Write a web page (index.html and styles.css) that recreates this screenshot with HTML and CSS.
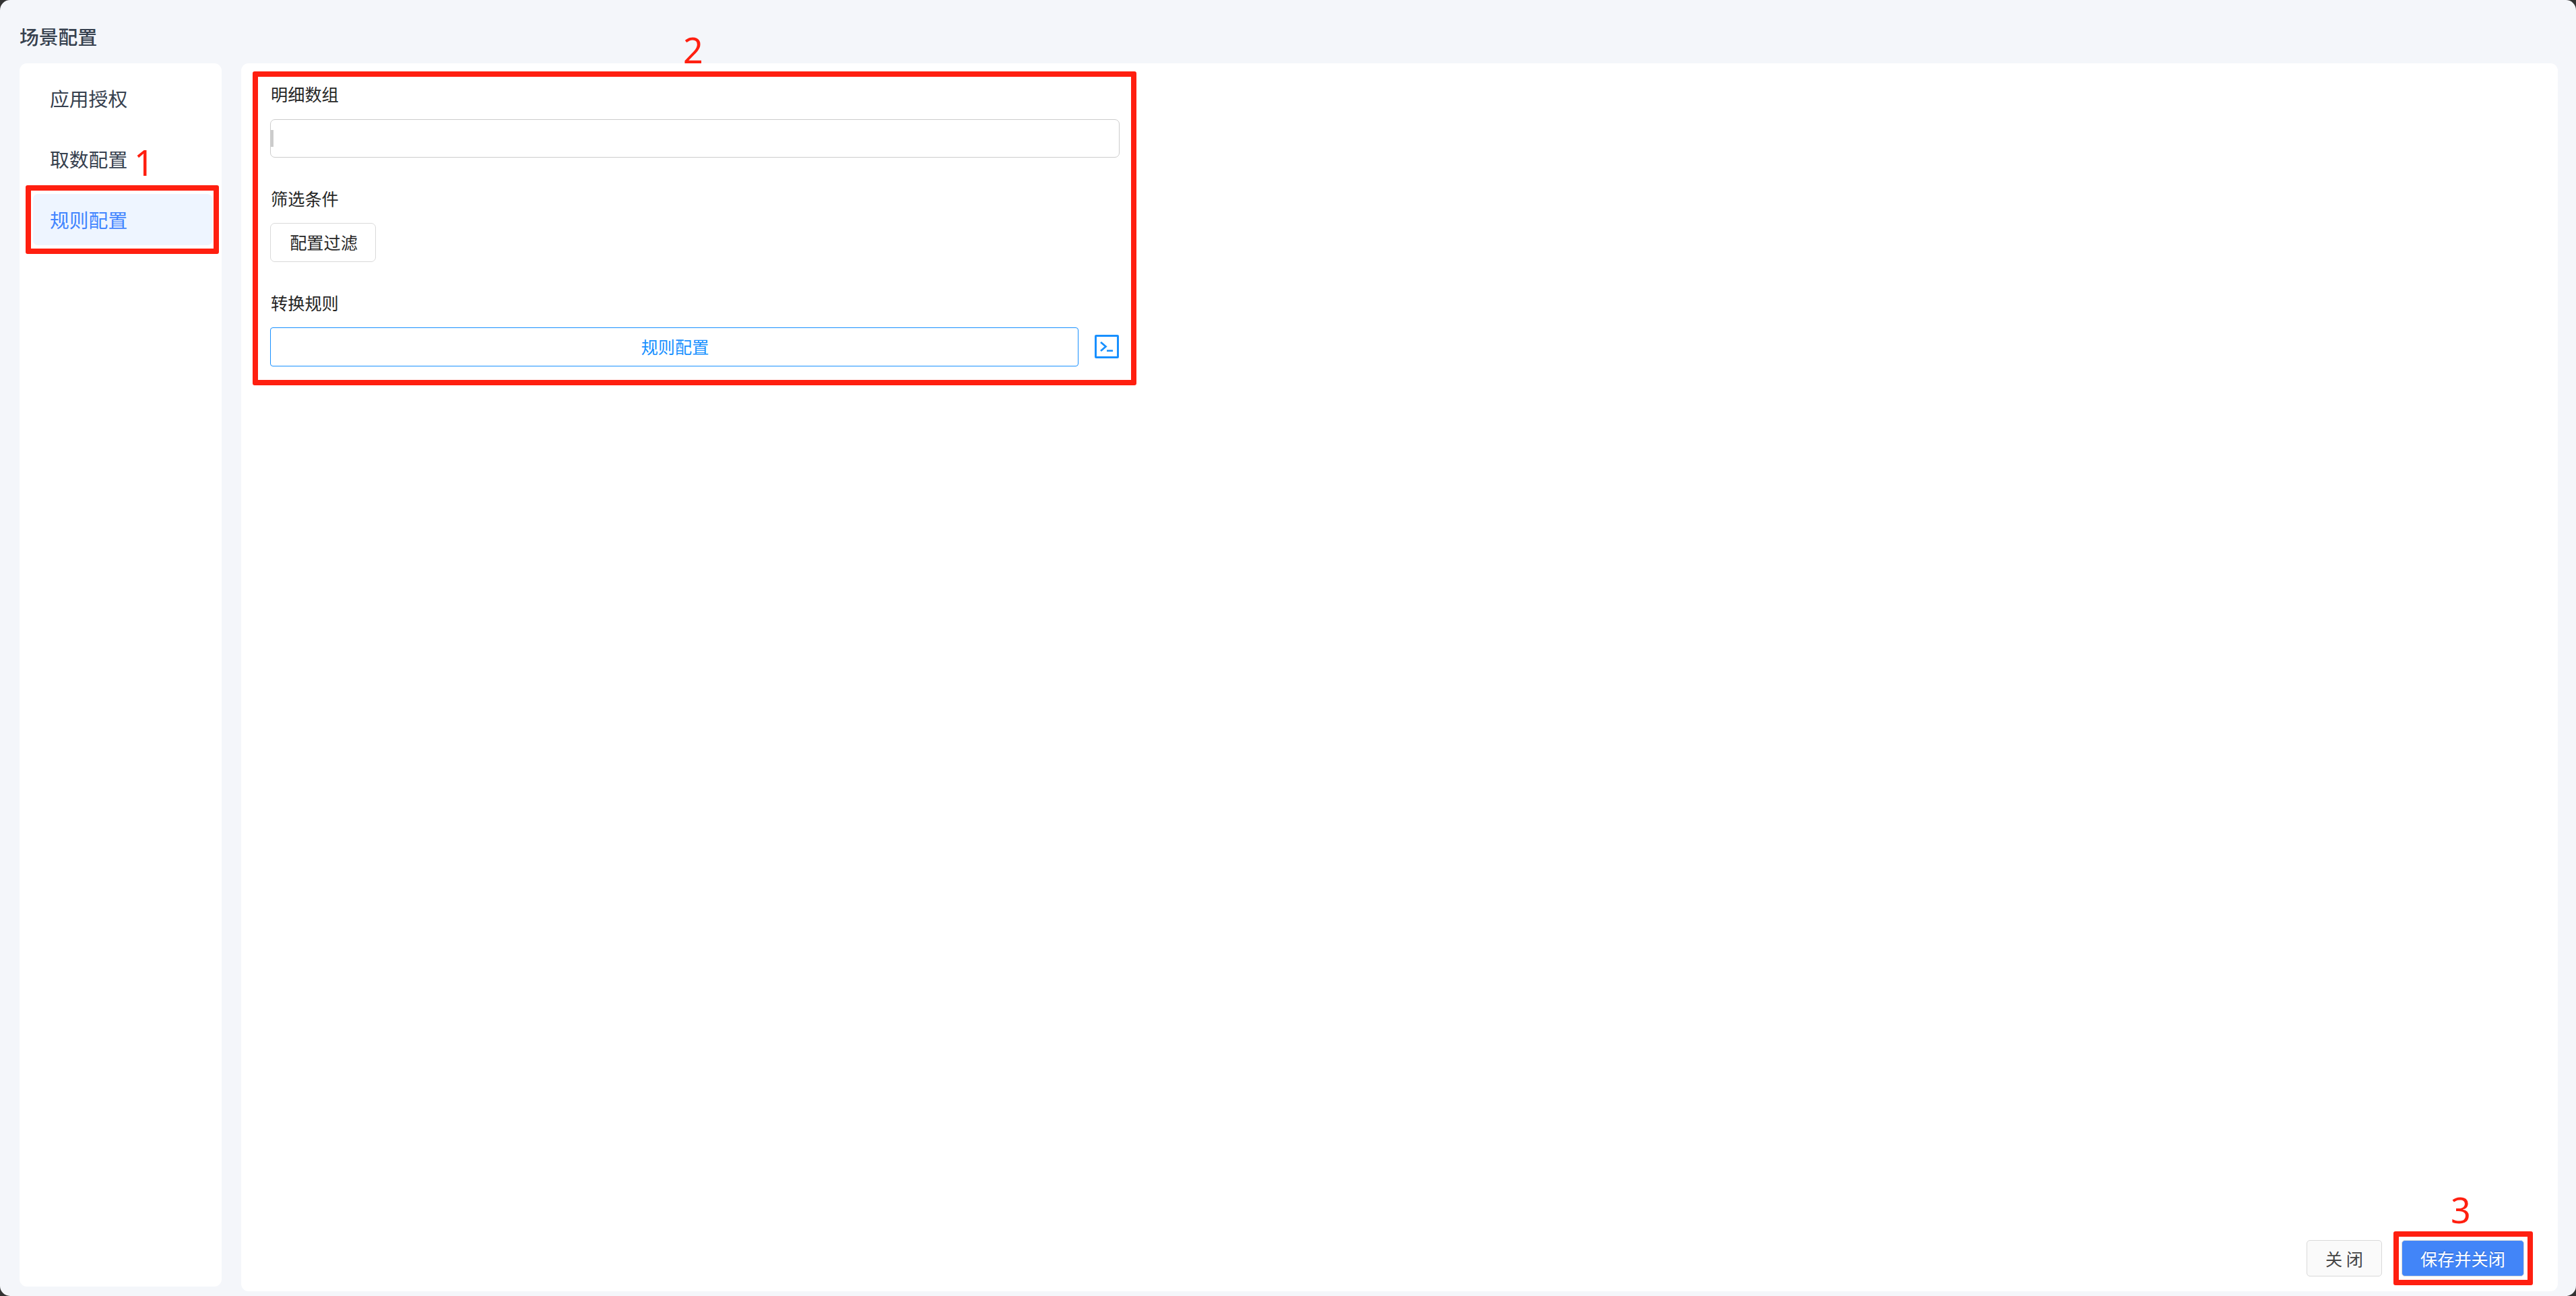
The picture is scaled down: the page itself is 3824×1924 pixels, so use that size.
FILE: index.html
```html
<!DOCTYPE html>
<html lang="zh-CN">
<head>
    <meta charset="UTF-8" />
    <meta name="viewport" content="width=device-width, initial-scale=1.0" />
    <title>场景配置</title>
    <link rel="stylesheet" href="styles.css">
</head>
<body>
    <div class="modal">
        <header class="modal-header"><h1 class="title">场景配置</h1></header>

        <div class="modal-body">
            <!-- Side menu -->
            <nav class="sidebar">
                <a class="menu-item">应用授权</a>
                <a class="menu-item">取数配置</a>
                <a class="menu-item menu-item-active">规则配置</a>
            </nav>

            <!-- Rule settings -->
            <main class="content">
                <form class="rule-form" action="">
                    <div class="form-item">
                        <label class="form-label">明细数组</label>
                        <div class="array-input"><span class="input-handle"></span></div>
                    </div>
                    <div class="form-item">
                        <label class="form-label">筛选条件</label>
                        <button class="btn btn-filter" type="button">配置过滤</button>
                    </div>
                    <div class="form-item">
                        <label class="form-label">转换规则</label>
                        <div class="rule-row">
                            <button class="btn btn-rule" type="button">规则配置</button>
                            <svg class="code-icon" viewBox="0 0 36 35" fill="none" stroke="#1890ff">
                                <rect x="1.5" y="1.5" width="33" height="32" rx="0.6" stroke-width="3" />
                                <path d="M9 11l7.5 6.5L9 24" stroke-width="2.8" />
                                <path d="M18 23.7h9" stroke-width="2.6" />
                            </svg>
                        </div>
                    </div>
                </form>

                <footer class="footer">
                    <button class="btn btn-close" type="button">关 闭</button>
                    <button class="btn btn-save" type="button">保存并关闭</button>
                </footer>
            </main>
        </div>
    </div>

    <!-- Step marks -->
    <div class="mark mark-menu"></div>
    <div class="mark mark-form"></div>
    <div class="mark mark-save"></div>
    <span class="step step-1">1</span>
    <span class="step step-2">2</span>
    <span class="step step-3">3</span>
</body>
</html>
```

FILE: styles.css
```css
/* Global CSS */
*,
*::before,
*::after {
    box-sizing: border-box;
}

body {
    position: relative;
    height: 1924px;
    margin: 0;
    overflow: hidden;
    background: #333;
    color: #262626;
    font-family: 'Noto Sans CJK SC', sans-serif;
    font-size: 25.2px;
}

button {
    margin: 0;
    font-family: inherit;
    font-size: inherit;
}

/* Modal */
.modal {
    display: flex;
    flex-direction: column;
    height: 100%;
    border-radius: 15px;
    background: #f4f6fa;
}

.modal-header {
    flex: none;
    height: 94px;
    padding: 32px 29px 0;
}

.title {
    margin: 0;
    color: #37414f;
    font-size: 28.8px;
    font-weight: 500;
    line-height: 44px;
}

.modal-body {
    display: flex;
    flex: 1;
    gap: 29px;
    padding: 0 27px 7px 29px;
}

/* Side menu */
.sidebar {
    display: flex;
    flex: none;
    flex-direction: column;
    gap: 14px;
    width: 300px;
    margin-bottom: 7px;
    padding: 14px 14px 14px 20px;
    border-radius: 11px;
    background: #fff;
}

.menu-item {
    height: 76px;
    padding-left: 25px;
    border-radius: 7px;
    color: #37414f;
    font-size: 28.8px;
    line-height: 76px;
}

.menu-item-active {
    background: #eef5ff;
    color: #4285ff;
}

/* Rule settings */
.content {
    display: flex;
    flex: 1;
    flex-direction: column;
    justify-content: space-between;
    padding: 25px 50px 22px 43px;
    border-radius: 11px;
    background: #fff;
}

.rule-form {
    display: flex;
    flex-direction: column;
    gap: 40px;
    width: 1261px;
}

.form-item {
    display: flex;
    flex-direction: column;
    align-items: flex-start;
}

.form-label {
    height: 57px;
    padding: 0 1px;
    line-height: 40px;
}

.array-input {
    display: flex;
    align-items: center;
    width: 100%;
    height: 57px;
    margin-top: 1px;
    border: 1px solid #ccc;
    border-radius: 7px;
}

.input-handle {
    width: 4px;
    height: 25px;
    background: #ccc;
}

.btn {
    height: 58px;
    padding: 0 0 2px 2px;
    border: 1px solid #d9d9d9;
    border-radius: 7px;
    background: #fff;
    color: #262626;
    line-height: 54px;
    white-space: nowrap;
}

.btn-filter {
    width: 157px;
}

.rule-row {
    display: flex;
    align-items: center;
    gap: 24px;
    width: 100%;
}

.btn-rule {
    width: 1200px;
    border-color: #1890ff;
    border-radius: 4px;
    color: #1890ff;
}

.code-icon {
    width: 36px;
    height: 35px;
    margin-bottom: 1px;
}

/* Footer buttons */
.footer {
    display: flex;
    justify-content: flex-end;
    gap: 29px;
}

.footer .btn {
    height: 54px;
    padding: 0;
    border-radius: 5px;
    line-height: 50px;
}

.btn-close {
    width: 112px;
    background: #fafafa;
    color: #444;
}

.btn-save {
    width: 182px;
    background: #4285f8;
    color: #fff;
    text-shadow: 0 -2px 0 rgba(0, 0, 0, 0.12);
}

/* Step marks */
.mark {
    position: absolute;
    border: 8px solid #ff1f10;
    border-radius: 3px;
}

.mark-menu {
    top: 275px;
    left: 38px;
    width: 287px;
    height: 102px;
}

.mark-form {
    top: 106px;
    left: 375px;
    width: 1312px;
    height: 466px;
}

.mark-save {
    top: 1828px;
    left: 3553px;
    width: 207px;
    height: 80px;
}

.step {
    position: absolute;
    color: #ff1f10;
    font-family: 'Noto Sans', sans-serif;
    font-size: 52px;
    line-height: 52px;
}

.step-1 {
    top: 215px;
    left: 199px;
}

.step-2 {
    top: 48px;
    left: 1014px;
}

.step-3 {
    top: 1770px;
    left: 3638px;
}
```
